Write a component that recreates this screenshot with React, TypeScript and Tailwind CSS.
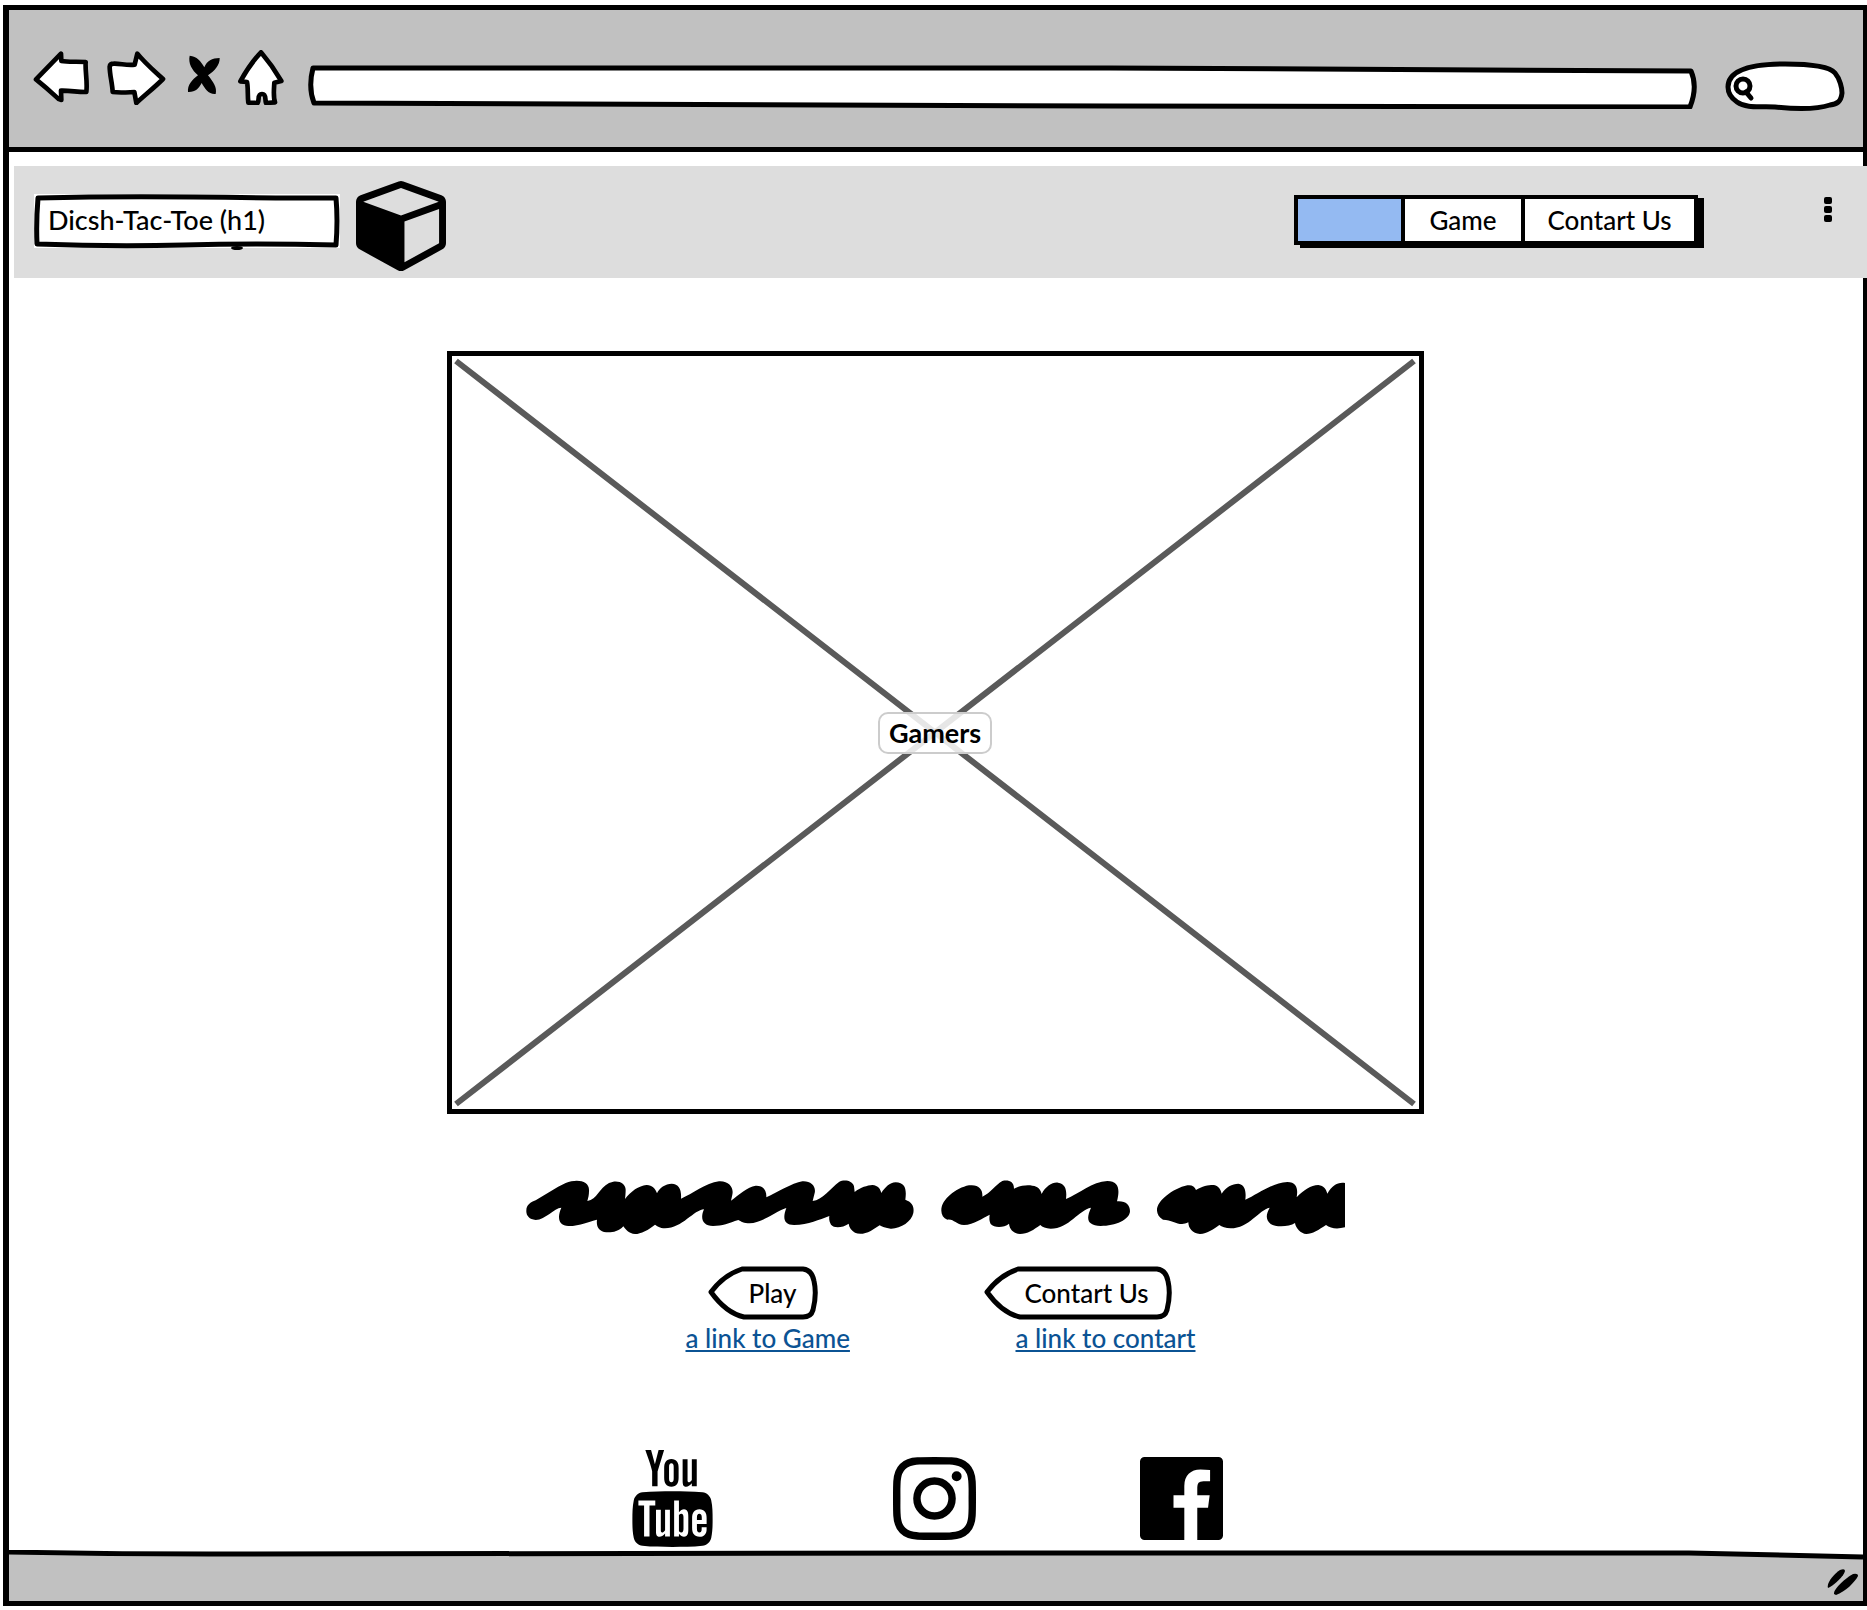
import type { ReactNode } from "react";
import { TfiYoutube } from "react-icons/tfi";

const ink = "#000";

function ToolIcon({
  label,
  viewBox,
  width,
  children,
}: {
  label: string;
  viewBox: string;
  width: number;
  children: ReactNode;
}) {
  return (
    <button type="button" aria-label={label} className="shrink-0">
      <svg viewBox={viewBox} width={width} height={55} className="block" aria-hidden="true">
        {children}
      </svg>
    </button>
  );
}

const outline = {
  fill: "#fff",
  stroke: ink,
  strokeWidth: 14,
  strokeLinejoin: "round" as const,
  strokeLinecap: "round" as const,
};

function Toolbar() {
  return (
    <div className="flex items-start border-b-[5px] border-black bg-[#c1c1c1] pt-10 pr-[18px] pb-9 pl-6">
      <div className="flex gap-4">
        <ToolIcon label="Back" viewBox="99 150 171 165" width={57}>
          <path
            {...outline}
            d="M108 238L183 161L184 183C205 187 230 184 257 186C255 215 263 245 259 276C235 277 210 271 183 272L184 300Q174 298 168 290Q138 262 108 238Z"
          />
        </ToolIcon>
        <ToolIcon label="Forward" viewBox="318 150 180 165" width={60}>
          <path
            {...outline}
            d="M329 200Q330 191 341 191C360 190 380 197 404 194L412 161C435 190 465 215 489 237C464 262 435 285 409 309L403 276C380 277 360 279 338 276C337 250 329 225 329 200Z"
          />
        </ToolIcon>
        <ToolIcon label="Stop" viewBox="552 150 120 165" width={40}>
          <path
            fill={ink}
            d="M575 167C597 170 608 182 619 202C627 182 642 174 665 174C666 195 650 212 630 226C645 245 658 262 653 282C632 284 620 265 611 249C603 265 592 277 570 276C568 255 582 240 600 226C582 210 570 190 575 167Z"
          />
        </ToolIcon>
        <ToolIcon label="Home" viewBox="717 150 138 165" width={46}>
          <path
            {...outline}
            d="M786 157Q820 197 847 243L826 248C825 268 822 290 828 307L801 309C797 297 803 282 789 282C774 282 782 298 776 309L748 308C745 285 748 265 744 246L724 244C740 215 762 182 786 157Z"
          />
        </ToolIcon>
      </div>
      <div className="relative mt-[15px] ml-6 h-11 min-w-0 flex-1">
        <svg
          viewBox="0 0 1387 44"
          preserveAspectRatio="none"
          className="absolute inset-0 h-full w-full"
          aria-hidden="true"
        >
          <path
            d="M5 3L800 3L1381 6Q1388 22 1380 42L800 41L6 38Q0 22 5 3Z"
            fill="#fff"
            stroke={ink}
            strokeWidth={5}
            strokeLinejoin="round"
          />
        </svg>
        <input
          type="text"
          aria-label="Address"
          className="relative h-full w-full bg-transparent px-4 text-[26px] outline-none"
        />
      </div>
      <div className="relative mt-[11px] ml-7 h-[50px] w-[120px] shrink-0">
        <svg viewBox="0 0 120 50" className="absolute inset-0 h-full w-full" aria-hidden="true">
          <g fill="#fff" stroke={ink} strokeLinecap="round" strokeLinejoin="round">
            <path
              strokeWidth={5}
              d="M3 26C3 11 22 3 60 3C88 3 105 6 110 12C115 18 117 27 117 32C116 41 112 43 105 44C90 49 70 48 50 46C35 45 22 48 12 41C6 37 3 32 3 26Z"
            />
            <circle cx={18} cy={25} r={7} strokeWidth={5} />
            <path strokeWidth={5} d="M21 31L26 37" />
          </g>
        </svg>
        <input
          type="search"
          aria-label="Search"
          className="relative h-full w-full bg-transparent pr-4 pl-9 text-lg outline-none"
        />
      </div>
    </div>
  );
}

function CubeLogo() {
  return (
    <svg viewBox="0 128 1664 1664" width={90} height={90} className="ml-4 shrink-0" role="img" aria-label="Dice">
      <path d="M896 1629l640-349v-636l-640 233v752zm-64-865l698-254-698-254-698 254zm832-252v768q0 35-18 65t-49 47l-704 384q-28 16-61 16t-61-16l-704-384q-31-17-49-47t-18-65v-768q0-40 23-73t61-47l704-256q22-8 44-8t44 8l704 256q38 14 61 47t23 73z" />
    </svg>
  );
}

function Header() {
  return (
    <header className="relative mt-3.5 -mr-1 ml-[5px] flex items-start bg-[#ddd] pt-[15px] pr-[35px] pb-[7px] pl-5">
      <div className="relative mt-[13px] h-[54px] w-[306px] bg-white">
        <svg
          viewBox="0 0 306 54"
          preserveAspectRatio="none"
          className="absolute inset-0 h-full w-full overflow-visible"
          aria-hidden="true"
        >
          <ellipse cx={203} cy={54} rx={6} ry={2} />
          <path
            d="M4 4Q80 2 160 3T302 4Q304 26 302 51Q220 49 150 51T3 50Q2 28 4 4Z"
            fill="#fff"
            stroke={ink}
            strokeWidth={5}
            strokeLinejoin="round"
          />
        </svg>
        <h1 className="relative pl-3.5 text-[27px] leading-[52px] font-medium whitespace-nowrap">
          Dicsh-Tac-Toe (h1)
        </h1>
      </div>
      <CubeLogo />
      <nav
        aria-label="Main"
        className="mt-3.5 ml-auto flex h-[50px] border-4 border-black bg-white text-[26px] leading-[42px] font-medium shadow-[6px_3px_0_#000]"
      >
        <a href="#home" aria-label="Home" className="w-[103px] bg-[#94baf2]" />
        <a href="#game" className="w-[120px] border-l-4 border-black text-center">
          Game
        </a>
        <a href="#contact" className="w-[173px] border-l-4 border-black text-center">
          Contart Us
        </a>
      </nav>
      <button type="button" aria-label="Menu" className="mt-4 ml-[126px] flex flex-col gap-0.5">
        <span className="h-[7px] w-2 rounded-[2px] bg-black" />
        <span className="h-[7px] w-2 rounded-[2px] bg-black" />
        <span className="h-[7px] w-2 rounded-[2px] bg-black" />
      </button>
    </header>
  );
}

function PicturePlaceholder() {
  return (
    <figure className="relative mt-[73px] flex aspect-[977/763] w-full max-w-[977px] items-center justify-center border-[5px] border-black">
      <svg
        viewBox="0 0 967 753"
        preserveAspectRatio="none"
        className="absolute inset-0 h-full w-full"
        aria-hidden="true"
      >
        <path d="M4 5L962 748M962 5L4 748" stroke="#5a5a5a" strokeWidth={6} />
      </svg>
      <figcaption className="relative rounded-[10px] border-2 border-[#ccc] bg-white/85 px-[9px] text-[27px] leading-[38px] font-bold">
        Gamers
      </figcaption>
    </figure>
  );
}

function ScribbleLine() {
  return (
    <svg
      viewBox="48 36 2460 165"
      className="mt-[66px] block w-full max-w-[820px]"
      role="img"
      aria-label="Placeholder text"
    >
      <path d="M52 128C52 110 65 103 80 97C110 80 140 58 170 45C205 32 243 38 240 70C240 80 238 90 235 99C265 95 270 60 300 45C325 33 350 45 350 65C350 75 349 85 348 93C365 70 390 53 412 51C428 50 440 62 444 76C450 60 470 47 488 47C510 47 518 65 516 92C550 78 590 45 630 40C660 38 675 60 670 80L666 98C690 80 715 57 740 53C765 52 773 70 772 88C800 75 850 45 880 40C905 38 922 55 917 75L911 99C940 97 965 60 990 42C1005 34 1030 37 1035 55L1037 72C1055 58 1075 52 1090 51C1108 52 1115 65 1117 75C1128 58 1142 44 1160 43C1190 44 1193 65 1189 95C1210 103 1216 115 1213 135C1208 160 1175 183 1145 182C1130 181 1118 176 1112 172L1085 189C1068 198 1050 200 1038 194C1028 188 1020 178 1019 167C1000 180 975 181 966 170C960 160 960 150 961 144C930 155 900 170 855 171C825 170 820 152 832 120C800 130 760 165 722 166C705 166 695 160 688 156C660 165 640 174 612 174C580 174 573 150 585 124C555 125 520 181 468 181C452 180 445 175 438 170C420 185 395 198 378 198C360 197 350 185 343 175C325 195 300 194 285 192C265 185 262 170 264 155C240 160 215 174 178 174C150 174 143 150 157 119C135 120 110 155 80 156C60 155 51 142 52 128Z" />
      <g transform="translate(1230 0)">
        <path d="M67 128C66 95 110 60 150 52C180 48 192 65 190 86C215 75 230 50 250 39C268 35 285 40 285 62C305 52 325 50 340 53C358 55 365 65 368 78C380 55 400 42 417 44C440 48 444 65 441 93C480 78 520 40 565 39C600 39 603 65 594 100C620 98 633 110 633 130C632 155 590 174 545 174C505 172 500 155 516 119C480 125 450 182 395 182C380 182 370 177 364 171C345 185 325 198 303 198C285 197 272 185 270 167C255 180 225 180 215 168C210 158 211 148 212 140C190 150 165 170 135 171C110 170 105 152 85 155C73 150 67 140 67 128Z" />
        <path d="M714 128C712 100 760 62 805 52C818 50 827 55 831 66C850 53 875 50 885 51C900 55 905 65 908 77C920 57 940 47 958 47C978 50 982 70 979 95C1015 80 1060 43 1105 42C1135 42 1137 65 1133 88C1155 65 1175 52 1198 51C1215 53 1222 65 1225 77C1240 52 1255 42 1278 45L1278 178C1255 184 1235 182 1221 171C1200 185 1180 198 1162 198C1145 197 1130 180 1128 165C1110 177 1070 178 1055 168C1040 155 1040 140 1052 119C1020 125 990 181 935 181C920 181 908 176 901 171C885 182 865 198 843 198C820 197 808 180 808 163C780 178 765 155 732 155C720 148 715 138 714 128Z" />
      </g>
    </svg>
  );
}

function ArrowButton({ width, children }: { width: number; children: ReactNode }) {
  const w = width;
  return (
    <button
      type="button"
      className="relative h-[54px] pl-[41px] text-left text-[26px] font-medium"
      style={{ width: w }}
    >
      <svg viewBox={`0 0 ${w} 54`} className="absolute inset-0 h-full w-full" aria-hidden="true">
        <path
          d={`M3 26Q16 9 34 3L${w - 15} 3Q${w - 6} 4 ${w - 4} 15Q${w - 1} 28 ${w - 5} 44Q${w - 7} 51 ${w - 15} 51L36 51Q18 47 3 26Z`}
          fill="#fff"
          stroke={ink}
          strokeWidth={5}
          strokeLinejoin="round"
        />
      </svg>
      <span className="relative">{children}</span>
    </button>
  );
}

const linkClass =
  "text-[26px] leading-9 font-medium text-[#0b5394] underline decoration-2 underline-offset-2 whitespace-nowrap";

function Actions() {
  return (
    <div className="mt-[31px] flex gap-[130px] pl-3">
      <div className="flex w-[168px] flex-col items-start">
        <div className="pl-[22px]">
          <ArrowButton width={110}>Play</ArrowButton>
        </div>
        <a href="#game" className={linkClass}>
          a link to Game
        </a>
      </div>
      <div className="flex w-[213px] flex-col items-start">
        <ArrowButton width={188}>Contart Us</ArrowButton>
        <a href="#contact" className={`ml-8 ${linkClass}`}>
          a link to contart
        </a>
      </div>
    </div>
  );
}

function SocialLinks() {
  return (
    <div className="mt-auto flex items-center pt-[90px] pr-6 pb-[3px]">
      <a href="#youtube" aria-label="YouTube">
        <TfiYoutube className="h-[97px] w-[97px]" />
      </a>
      <a href="#instagram" aria-label="Instagram" className="ml-[172px]">
        <svg viewBox="128 128 1536 1536" width={83} height={83} aria-hidden="true">
          <path d="M1152 896q0-106-75-181t-181-75-181 75-75 181 75 181 181 75 181-75 75-181zm138 0q0 164-115 279t-279 115-279-115-115-279 115-279 279-115 279 115 115 279zm108-410q0 38-27 65t-65 27-65-27-27-65 27-65 65-27 65 27 27 65zm-502-220q-7 0-76.5-.5t-105.5 0-96.5 3-103 10-71.5 18.5q-50 20-88 58t-58 88q-11 29-18.5 71.5t-10 103-3 96.5 0 105.5.5 76.5-.5 76.5 0 105.5 3 96.5 10 103 18.5 71.5q20 50 58 88t88 58q29 11 71.5 18.5t103 10 96.5 3 105.5 0 76.5-.5 76.5.5 105.5 0 96.5-3 103-10 71.5-18.5q50-20 88-58t58-88q11-29 18.5-71.5t10-103 3-96.5 0-105.5-.5-76.5.5-76.5 0-105.5-3-96.5-10-103-18.5-71.5q-20-50-58-88t-88-58q-29-11-71.5-18.5t-103-10-96.5-3-105.5 0-76.5.5zm768 630q0 229-5 317-10 208-124 322t-322 124q-88 5-317 5t-317-5q-208-10-322-124t-124-322q-5-88-5-317t5-317q10-208 124-322t322-124q88-5 317-5t317 5q208 10 322 124t124 322q5 88 5 317z" />
        </svg>
      </a>
      <a href="#facebook" aria-label="Facebook" className="ml-[164px]">
        <svg viewBox="128 128 1536 1536" width={83} height={83} aria-hidden="true">
          <path d="M1579 128q35 0 60 25t25 60v1366q0 35-25 60t-60 25h-391v-595h199l30-232h-229v-148q0-56 23.5-84t91.5-28l122-1v-207q-63-9-178-9-136 0-217.5 80t-81.5 226v171h-200v232h200v595h-735q-35 0-60-25t-25-60v-1366q0-35 25-60t60-25h1366z" />
        </svg>
      </a>
    </div>
  );
}

function StatusBar() {
  return (
    <footer className="relative flex h-[51px] items-center justify-end pt-3.5 pr-1">
      <svg
        viewBox="0 0 1854 51"
        preserveAspectRatio="none"
        className="absolute inset-0 h-full w-full"
        aria-hidden="true"
      >
        <path d="M0 2Q100 4 200 4L1680 3L1854 7V51H0Z" fill="#c1c1c1" />
        <path d="M0 2Q100 4 200 4L1000 3L1680 3L1854 7" fill="none" stroke={ink} strokeWidth={5} />
      </svg>
      <svg viewBox="0 0 32 27" width={32} height={27} className="relative" aria-hidden="true">
        <path d="M1 19C-1 14 8 4 13 1Q18 -1 18 2C17 7 8 15 3 18Z" />
        <path d="M7 25C6 20 20 8 26 5Q31 4 31 7C28 13 18 23 9 26Z" />
      </svg>
    </footer>
  );
}

export default function App() {
  return (
    <div className="flex min-h-screen flex-col bg-white pt-[5px] pb-1 pl-[3px] font-['Lato',sans-serif] text-black">
      <div className="flex flex-1 flex-col border-[5px] border-r-4 border-l-6 border-black">
        <Toolbar />
        <Header />
        <main className="flex flex-1 flex-col items-center pr-0.5">
          <PicturePlaceholder />
          <ScribbleLine />
          <Actions />
          <SocialLinks />
        </main>
        <StatusBar />
      </div>
    </div>
  );
}
